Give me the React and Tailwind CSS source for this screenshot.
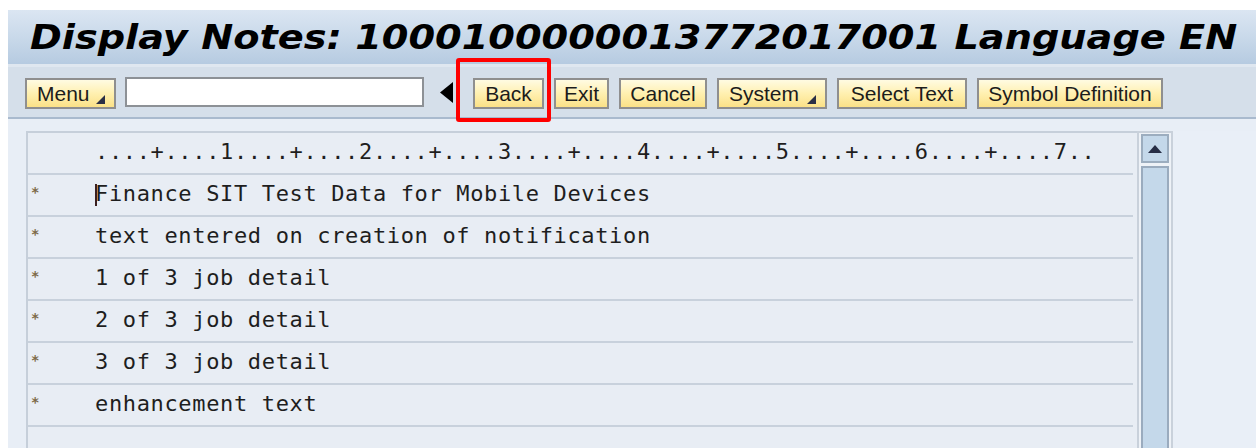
import React from "react";

const ruler = "....+....1....+....2....+....3....+....4....+....5....+....6....+....7..";

const lines = [
  "Finance SIT Test Data for Mobile Devices",
  "text entered on creation of notification",
  "1 of 3 job detail",
  "2 of 3 job detail",
  "3 of 3 job detail",
  "enhancement text",
  "",
];

function Corner() {
  return (
    <svg className="absolute right-[9px] bottom-[3px]" width="9" height="9" viewBox="0 0 9 9">
      <polygon points="0,9 9,9 9,0" fill="#2b2f45" />
    </svg>
  );
}

function SapButton({ label, width, menu = false, left = false }) {
  return (
    <div
      className={`relative h-[31px] flex items-center border-2 border-[#8f8f8f] bg-gradient-to-b from-[#fffbe2] via-[#fff0b0] to-[#fbe187] text-[21px] leading-none text-[#1c1c1c] ${
        left ? "justify-start pl-[10px]" : "justify-center"
      }`}
      style={{ width, fontFamily: '"Liberation Sans", Arial, sans-serif' }}
    >
      <span className="-mt-[1px]">{label}</span>
      {menu && <Corner />}
    </div>
  );
}

export default function App() {
  return (
    <div className="w-[1259px] h-[448px] overflow-hidden bg-white pt-[10px] pl-[8px] pr-[3px]">
      <div className="relative flex flex-col h-[438px]">
        {/* title bar */}
        <div className="shrink-0 h-[57px] flex items-center pl-[22px] bg-gradient-to-b from-[#dbe6f2] via-[#c9d9ea] to-[#b6cbe1] border-b-[3px] border-[#dfe7f0] overflow-hidden">
          <span
            className="inline-block origin-left scale-x-[1.16] text-[33px] font-bold italic text-black leading-none whitespace-nowrap"
            style={{ fontFamily: '"DejaVu Sans", Verdana, sans-serif' }}
          >
            Display Notes: 1000100000013772017001 Language EN
          </span>
        </div>

        {/* application toolbar */}
        <div className="shrink-0 h-[52px] flex items-start pt-[11px] pl-[17px] bg-[#d5dfea] border-b-2 border-[#a9bace]">
          <SapButton label="Menu" width={91} menu left />
          <div className="ml-[9px] -mt-[1px] w-[299px] h-[30px] bg-white border-2 border-[#8d9196]" />
          <svg className="ml-[16px] mt-[4px]" width="13" height="21" viewBox="0 0 13 21">
            <polygon points="13,0 13,21 0,10.5" fill="#000" />
          </svg>
          <div className="ml-[20px]">
            <SapButton label="Back" width={71} />
          </div>
          <div className="ml-[10px]">
            <SapButton label="Exit" width={55} />
          </div>
          <div className="ml-[10px]">
            <SapButton label="Cancel" width={88} />
          </div>
          <div className="ml-[10px]">
            <SapButton label="System" width={110} menu left />
          </div>
          <div className="ml-[10px]">
            <SapButton label="Select Text" width={130} />
          </div>
          <div className="ml-[10px]">
            <SapButton label="Symbol Definition" width={186} />
          </div>
        </div>

        {/* highlight around Back */}
        <div className="absolute left-[448px] top-[48px] w-[95px] h-[64px] border-[4px] border-[#ff0000] rounded-[3px]" />

        {/* editor area */}
        <div className="flex-1 min-h-0 overflow-hidden bg-[#e8eef6] pt-[12px] pl-[18px] flex">
          <div className="flex">
            <div
              className="w-[1111px] border-l-2 border-t-2 border-[#c6cfda] bg-[#e8edf4] text-[22px] tracking-[0.65px] text-[#1e1e1e]"
              style={{ fontFamily: '"DejaVu Sans Mono", Consolas, monospace' }}
            >
              <div className="h-[42px] flex items-center border-b-2 border-[#c8d1dc] mr-[4px] pl-[67px] whitespace-pre">
                <span className="-mt-[3px]">{ruler}</span>
              </div>
              {lines.map((t, i) => (
                <div
                  key={i}
                  className="relative h-[42px] flex items-center border-b-2 border-[#c8d1dc] mr-[4px] whitespace-pre"
                >
                  <span className="w-[67px] pl-[3px] text-[14px] font-bold text-[#7d6a47] self-center -mt-[6px]">
                    {t ? "*" : ""}
                  </span>
                  {i === 0 && (
                    <span className="absolute left-[67px] top-[9px] w-[2px] h-[22px] bg-[#3a2020]" />
                  )}
                  <span className="-mt-[3px]">{t}</span>
                </div>
              ))}
            </div>

            {/* vertical scrollbar */}
            <div className="w-[36px] border-l-2 border-t-2 border-r-2 border-[#c9d1db] bg-[#eef2f7] pt-[1px] pl-[2px]">
              <div className="w-[28px] h-[29px] bg-[#c4d8ea] border-2 border-[#9cadbf] flex items-center justify-center">
                <svg width="14" height="8" viewBox="0 0 14 8">
                  <polygon points="0,8 14,8 7,0" fill="#262d45" />
                </svg>
              </div>
              <div className="mt-[3px] w-[28px] h-[300px] bg-[#c4d8ea] border-2 border-[#9aabbe]" />
            </div>
          </div>
          <div className="flex-1 bg-[#e9eff7]" />
        </div>
      </div>
    </div>
  );
}
